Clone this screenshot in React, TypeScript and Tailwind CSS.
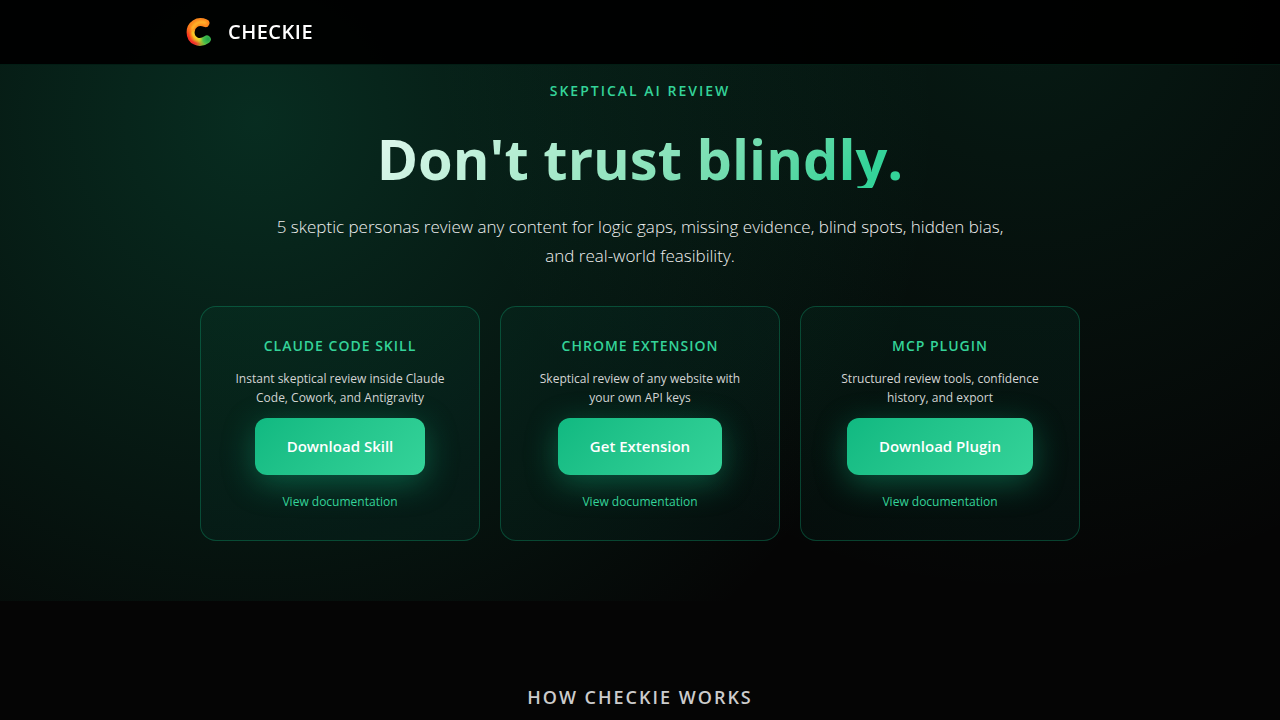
interface Product {
  title: string;
  description: string;
  action: string;
}

const products: Product[] = [
  {
    title: "Claude Code Skill",
    description: "Instant skeptical review inside Claude Code, Cowork, and Antigravity",
    action: "Download Skill",
  },
  {
    title: "Chrome Extension",
    description: "Skeptical review of any website with your own API keys",
    action: "Get Extension",
  },
  {
    title: "MCP Plugin",
    description: "Structured review tools, confidence history, and export",
    action: "Download Plugin",
  },
];

function Logo() {
  return (
    <svg viewBox="0 0 28 28" className="h-7 w-7" fill="none" strokeLinecap="round" aria-hidden="true">
      <defs>
        <linearGradient id="logo-base" x1="4" y1="3" x2="21" y2="26" gradientUnits="userSpaceOnUse">
          <stop offset="0" stopColor="#f98a1e" />
          <stop offset="0.5" stopColor="#ff861c" />
          <stop offset="0.75" stopColor="#d8c72a" />
          <stop offset="1" stopColor="#3fae3a" />
        </linearGradient>
        <radialGradient id="logo-green" cx="22" cy="21" r="10" gradientUnits="userSpaceOnUse">
          <stop offset="0" stopColor="#1fa04a" />
          <stop offset="0.5" stopColor="#4cc04a" />
          <stop offset="1" stopColor="#c8d62e" stopOpacity="0" />
        </radialGradient>
        <linearGradient id="logo-red" x1="3" y1="6" x2="17" y2="27" gradientUnits="userSpaceOnUse">
          <stop offset="0" stopColor="#ff5a1a" stopOpacity="0" />
          <stop offset="0.3" stopColor="#f8321f" />
          <stop offset="0.8" stopColor="#f0282c" />
          <stop offset="1" stopColor="#f0282c" stopOpacity="0" />
        </linearGradient>
        <filter id="logo-soft" x="-20%" y="-20%" width="140%" height="140%">
          <feGaussianBlur stdDeviation="0.9" />
        </filter>
        <mask id="logo-shape">
          <path
            d="M19.4 5.2C11.500 1.800 4.600 7 4.600 14.200C4.600 22.500 13 27 20.800 21.400"
            stroke="#fff"
            strokeWidth="8"
          />
        </mask>
      </defs>
      <g mask="url(#logo-shape)">
        <rect width="28" height="28" fill="url(#logo-base)" />
        <path d="M19.500 4.800C13.500 2.800 8 5.500 6.200 11" stroke="#ffb92c" strokeWidth="2.800" filter="url(#logo-soft)" />
        <path d="M7.200 14C7.400 18.500 11 22 17 20.500" stroke="#efe02c" strokeWidth="2.800" filter="url(#logo-soft)" />
        <path d="M2.500 6C-1.500 14 1 23 8 26C12 28 17 28 20 26" stroke="url(#logo-red)" strokeWidth="5.500" filter="url(#logo-soft)" />
        <rect width="28" height="28" fill="url(#logo-green)" />
      </g>
    </svg>
  );
}

function ProductCard({ title, description, action }: Product) {
  return (
    <article className="flex flex-col items-center rounded-2xl border border-[#10b981]/30 bg-linear-135 from-[#10b981]/5 to-[#14b8a6]/5 p-7">
      <h2 className="text-sm/[22px] font-semibold tracking-[1px] text-[#34d399] uppercase">{title}</h2>
      <p className="mt-3 mb-[11px] text-xs/[19px] text-[#d4d4d4]">{description}</p>
      <button
        type="button"
        className="rounded-xl bg-linear-135 from-[#10b981] to-[#34d399] px-8 py-4 text-[15px]/[25px] font-semibold text-white shadow-[0_8px_32px_rgba(16,185,129,0.4)]"
      >
        {action}
      </button>
      <a href="#docs" className="mt-4 text-xs/[21px] text-[#34d399]">
        View documentation
      </a>
    </article>
  );
}

function App() {
  return (
    <div className="min-h-screen bg-[#050505] font-['Open_Sans','Noto_Sans',sans-serif] text-white">
      <header className="fixed inset-x-0 top-0 z-10 border-b border-[#10b981]/15 bg-black/95">
        <div className="mx-auto flex h-16 max-w-[908px] items-center gap-3.5">
          <Logo />
          <span className="text-xl font-semibold tracking-[0.5px]">CHECKIE</span>
        </div>
      </header>

      <main>
        <section className="bg-[radial-gradient(circle_at_20%_20%,rgba(16,185,129,0.22),transparent_60%),radial-gradient(circle_at_80%_0%,rgba(16,185,129,0.12),transparent_50%)] px-6 pt-20 pb-[60px] text-center">
          <p className="text-sm/[22px] font-semibold tracking-[2px] text-[#34d399] uppercase">
            Skeptical AI Review
          </p>
          <h1 className="mx-auto mt-[26px] w-fit bg-linear-135 from-[#e0f8ee] to-[#34d399] to-90% bg-clip-text text-[56px]/[60px] font-bold text-transparent">
            Don't trust blindly.
          </h1>
          <p className="mx-auto mt-6 max-w-[740px] text-[17px]/[29px] font-light text-[#f0f0f0]">
            5 skeptic personas review any content for logic gaps, missing evidence, blind spots, hidden bias, and
            real-world feasibility.
          </p>
          <div className="mx-auto mt-9 grid max-w-[880px] grid-cols-3 gap-5">
            {products.map((product) => (
              <ProductCard key={product.title} {...product} />
            ))}
          </div>
        </section>

        <section className="px-6 pt-20 text-center">
          <h2 className="text-lg/[32px] font-semibold tracking-[2px] text-[#cccccc] uppercase">How Checkie Works</h2>
        </section>
      </main>
    </div>
  );
}

export default App;
